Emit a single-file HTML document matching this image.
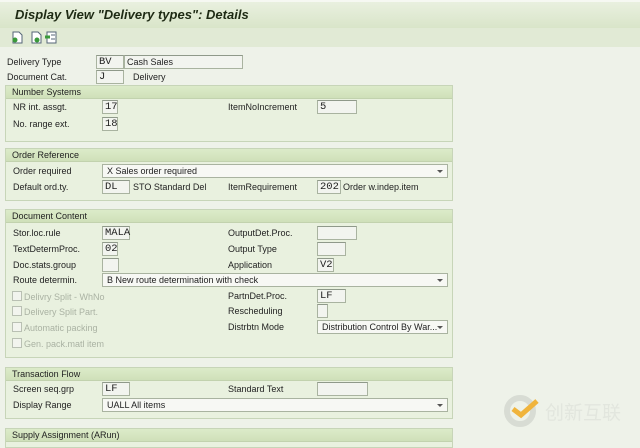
<!DOCTYPE html>
<html><head><meta charset="utf-8"><style>
*{margin:0;padding:0;box-sizing:border-box}
body{width:640px;height:442px;overflow:hidden;background:#eef2e9;font-family:"Liberation Sans",Tahoma,sans-serif;font-size:9.5px;color:#222;position:relative}
.a{position:absolute;white-space:nowrap}
#title{left:0;top:0;width:640px;height:28px;background:linear-gradient(#e9f0df,#d9e5c9);border-top:2px solid #f6f8f2}
#title span{position:absolute;left:15px;top:5px;font-weight:bold;font-style:italic;font-size:13px;color:#1e2a14}
#tb{left:0;top:28px;width:640px;height:19px;background:#e1ead5}
.g{position:absolute;left:5px;width:448px;background:#e9f1df;border:1px solid #c7d5b8}
.g .h{height:13px;background:linear-gradient(#dcebc9,#cfe0b9);border-bottom:1px solid #c2d2ae;padding-left:6px;line-height:12px;font-size:9px}
.i{position:absolute;height:14px;background:#f2f4ef;border:1px solid #a9b3a0;border-top-color:#8f998a;font-family:"Liberation Mono",monospace;font-size:10.5px;line-height:13px;padding-left:2px}
.d{position:absolute;height:14px;background:#f7f8f4;border:1px solid #a9b3a0;font-size:9px;line-height:12px;padding-left:4px}
.d:after{content:"";position:absolute;right:4px;top:5px;border:3px solid transparent;border-top:3px solid #555}
.l{position:absolute;font-size:9px}
.cb{position:absolute;font-size:9px;color:#aab2a3}
.cb:before{content:"";display:inline-block;width:8px;height:8px;border:1px solid #b9c0b3;vertical-align:-1px;margin-right:2px;background:#f2f4ee}
</style></head><body>
<div class="a" id="title"><span>Display View "Delivery types": Details</span></div>
<div class="a" id="tb">
<svg style="position:absolute;left:12px;top:3px" width="46" height="13"><path d="M1 1h6l3 3v8H1z" fill="#fff" stroke="#567"/><circle cx="3" cy="9" r="2.5" fill="#3a9a3a"/><path d="M20 1h6l3 3v8h-9z" fill="#fff" stroke="#567"/><circle cx="25" cy="9" r="2.5" fill="#3a9a3a"/><rect x="35" y="1" width="9" height="11" fill="#fff" stroke="#567"/><path d="M33 6h5" stroke="#3a9a3a" stroke-width="3"/><path d="M39 4h4M39 8h4" stroke="#567"/></svg></div>

<div class="l" style="left:7px;top:57px">Delivery Type</div>
<div class="i" style="left:96px;top:55px;width:28px">BV</div>
<div class="i" style="left:124px;top:55px;width:119px;font-family:'Liberation Sans',sans-serif;font-size:9px;line-height:12px">Cash Sales</div>
<div class="l" style="left:7px;top:72px">Document Cat.</div>
<div class="i" style="left:96px;top:70px;width:28px">J</div>
<div class="l" style="left:133px;top:72px">Delivery</div>

<div class="g" style="top:85px;height:57px"><div class="h">Number Systems</div></div>
<div class="l" style="left:13px;top:102px">NR int. assgt.</div>
<div class="i" style="left:102px;top:100px;width:16px">17</div>
<div class="l" style="left:228px;top:102px">ItemNoIncrement</div>
<div class="i" style="left:317px;top:100px;width:40px">5</div>
<div class="l" style="left:13px;top:119px">No. range ext.</div>
<div class="i" style="left:102px;top:117px;width:16px">18</div>

<div class="g" style="top:148px;height:53px"><div class="h">Order Reference</div></div>
<div class="l" style="left:13px;top:166px">Order required</div>
<div class="d" style="left:102px;top:164px;width:346px">X Sales order required</div>
<div class="l" style="left:13px;top:182px">Default ord.ty.</div>
<div class="i" style="left:102px;top:180px;width:28px">DL</div>
<div class="l" style="left:133px;top:182px">STO Standard Del</div>
<div class="l" style="left:228px;top:182px">ItemRequirement</div>
<div class="i" style="left:317px;top:180px;width:24px">202</div>
<div class="l" style="left:343px;top:182px">Order w.indep.item</div>

<div class="g" style="top:209px;height:149px"><div class="h">Document Content</div></div>
<div class="l" style="left:13px;top:228px">Stor.loc.rule</div>
<div class="i" style="left:102px;top:226px;width:28px">MALA</div>
<div class="l" style="left:228px;top:228px">OutputDet.Proc.</div>
<div class="i" style="left:317px;top:226px;width:40px"></div>
<div class="l" style="left:13px;top:244px">TextDetermProc.</div>
<div class="i" style="left:102px;top:242px;width:16px">02</div>
<div class="l" style="left:228px;top:244px">Output Type</div>
<div class="i" style="left:317px;top:242px;width:29px"></div>
<div class="l" style="left:13px;top:260px">Doc.stats.group</div>
<div class="i" style="left:102px;top:258px;width:17px"></div>
<div class="l" style="left:228px;top:260px">Application</div>
<div class="i" style="left:317px;top:258px;width:17px">V2</div>
<div class="l" style="left:13px;top:275px">Route determin.</div>
<div class="d" style="left:102px;top:273px;width:346px">B New route determination with check</div>
<div class="cb" style="left:12px;top:291px">Delivry Split - WhNo</div>
<div class="l" style="left:228px;top:291px">PartnDet.Proc.</div>
<div class="i" style="left:317px;top:289px;width:29px">LF</div>
<div class="cb" style="left:12px;top:306px">Delivery Split Part.</div>
<div class="l" style="left:228px;top:306px">Rescheduling</div>
<div class="i" style="left:317px;top:304px;width:11px"></div>
<div class="cb" style="left:12px;top:322px">Automatic packing</div>
<div class="l" style="left:228px;top:322px">Distrbtn Mode</div>
<div class="d" style="left:317px;top:320px;width:131px">Distribution Control By War...</div>
<div class="cb" style="left:12px;top:338px">Gen. pack.matl item</div>

<div class="g" style="top:367px;height:52px"><div class="h">Transaction Flow</div></div>
<div class="l" style="left:13px;top:384px">Screen seq.grp</div>
<div class="i" style="left:102px;top:382px;width:28px">LF</div>
<div class="l" style="left:228px;top:384px">Standard Text</div>
<div class="i" style="left:317px;top:382px;width:51px"></div>
<div class="l" style="left:13px;top:400px">Display Range</div>
<div class="d" style="left:102px;top:398px;width:346px">UALL All items</div>

<div class="g" style="top:428px;height:20px"><div class="h">Supply Assignment (ARun)</div></div>

<svg class="a" style="left:503px;top:395px" width="40" height="32"><circle cx="17" cy="16" r="13" fill="none" stroke="#d8dcd4" stroke-width="6"/><path d="M10 14l8 6 16-14" fill="none" stroke="#f0b43c" stroke-width="5"/></svg>
<div class="a" style="left:545px;top:398px;font-family:'Noto Sans CJK SC',sans-serif;font-size:19px;color:#e2e6de">创新互联</div>
</body></html>
